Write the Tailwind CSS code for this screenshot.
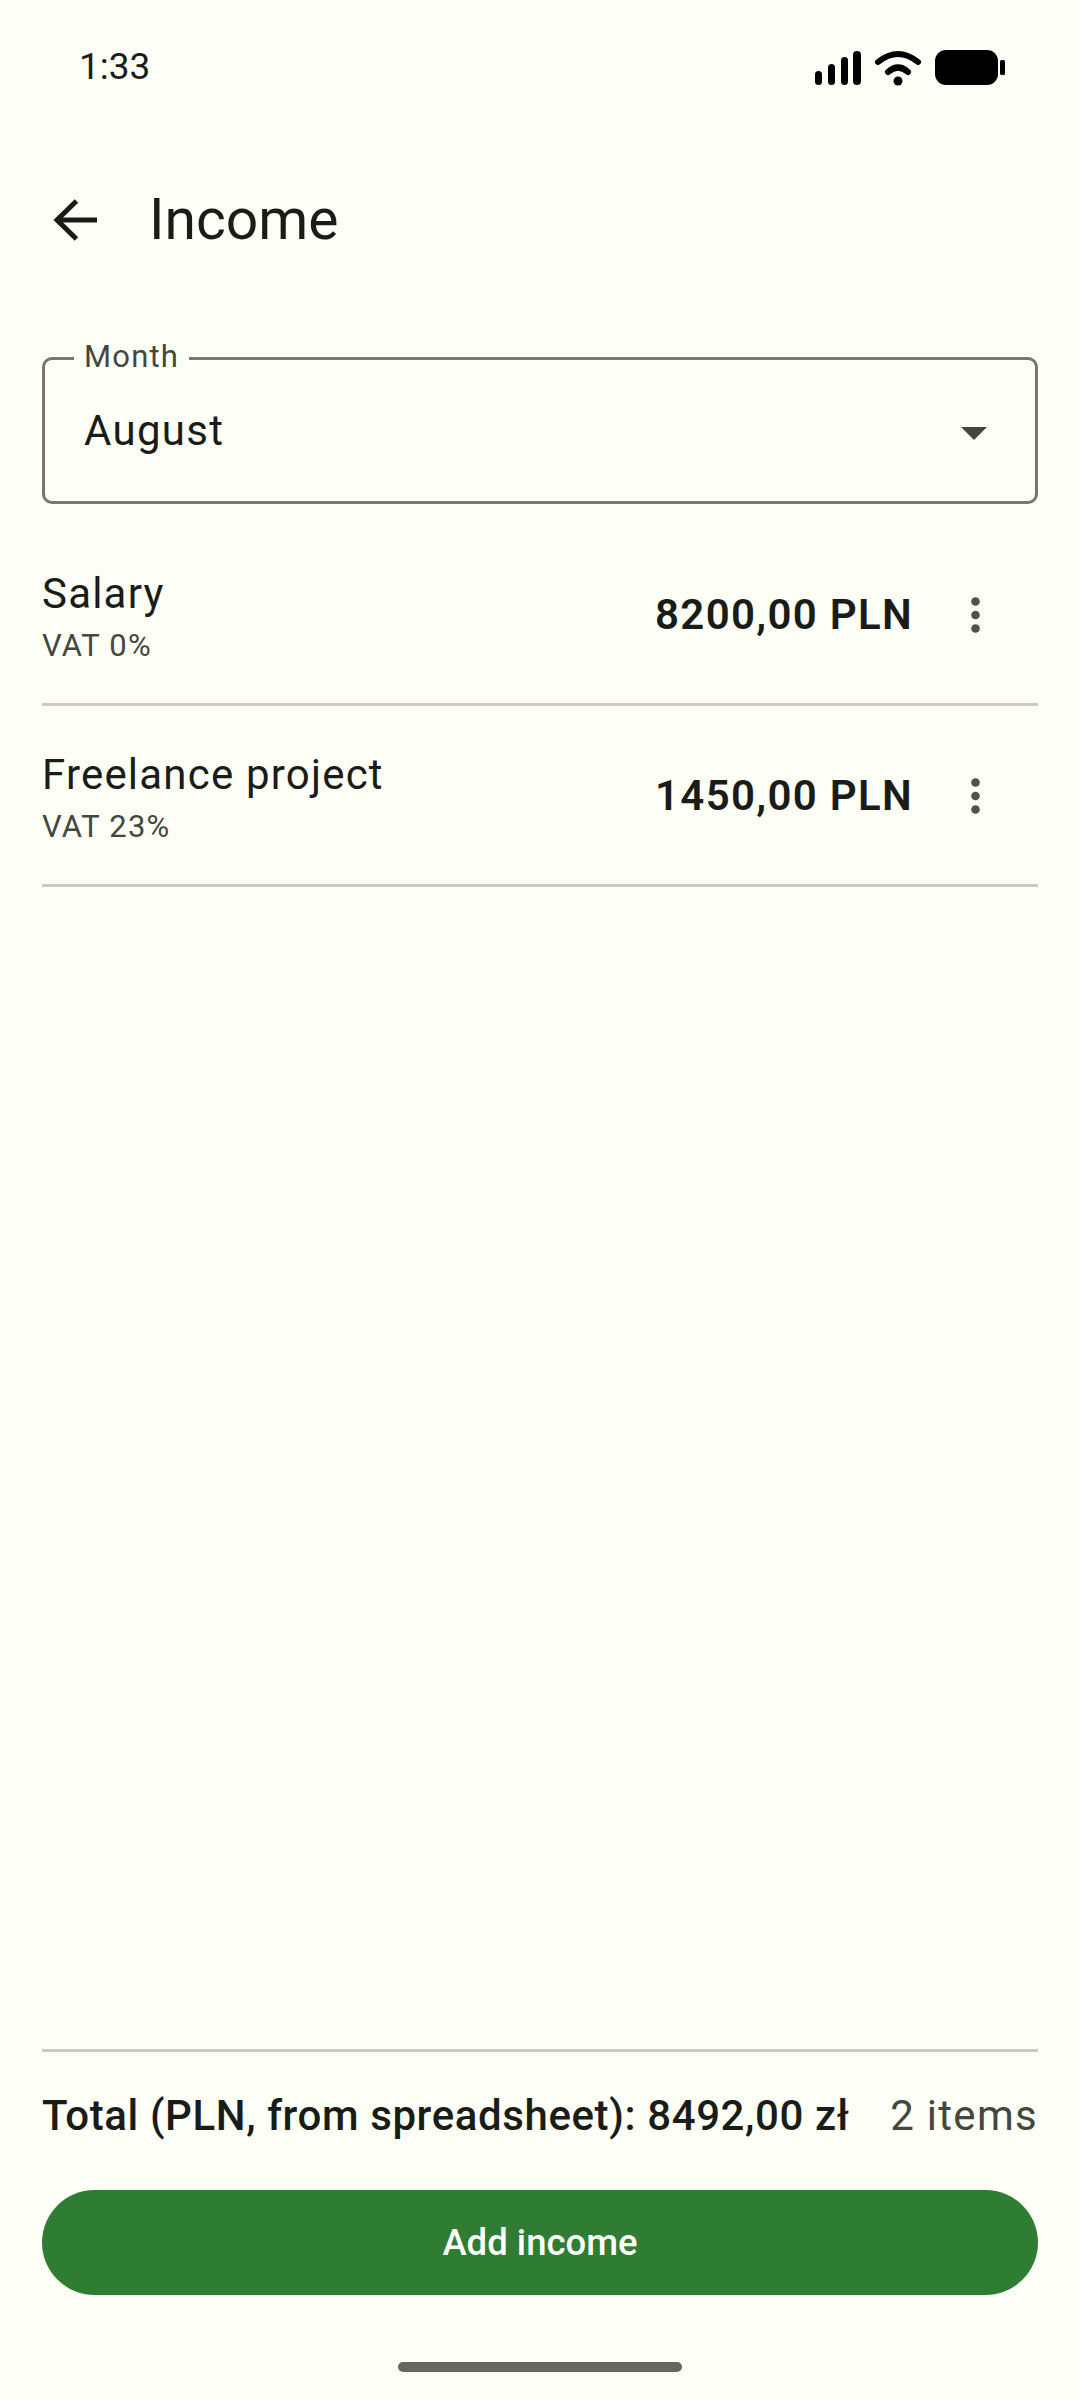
<!DOCTYPE html>
<html lang="en">
<head>
  <meta charset="UTF-8" />
  <meta name="viewport" content="width=device-width, initial-scale=1.0" />
  <title>Income</title>
  <script src="https://cdn.jsdelivr.net/npm/@tailwindcss/browser@4"></script>
</head>
<body class="bg-[#fdfef6] text-[#1a1c18] font-['Roboto',sans-serif] flex flex-col h-[2400px] w-[1080px] overflow-hidden">

  <!-- Status bar -->
  <div class="h-[136px] pl-[79px] pr-[75px] pt-[44px] flex justify-between items-start shrink-0">
    <span class="text-[37px] leading-[46px] text-[#1a1c18]">1:33</span>
    <svg class="w-[190px] h-[40px] mt-[6px]" viewBox="0 0 190 40" fill="#000">
      <rect x="0" y="21" width="7" height="14" rx="3.5" />
      <rect x="13" y="14" width="7" height="21" rx="3.5" />
      <rect x="26" y="7" width="7" height="28" rx="3.5" />
      <rect x="38" y="1" width="8" height="34" rx="4" />
      <path d="M63 12 Q83 -4 103 12" fill="none" stroke="#000" stroke-width="6" stroke-linecap="round" />
      <path d="M73 22 Q83 13 93 22" fill="none" stroke="#000" stroke-width="6" stroke-linecap="round" />
      <circle cx="83" cy="31" r="4.5" />
      <rect x="120" y="0" width="63" height="35" rx="11" />
      <rect x="185" y="10" width="5" height="15" rx="1.5" />
    </svg>
  </div>

  <!-- Header -->
  <header class="h-[168px] pl-[53px] flex items-center shrink-0">
    <svg class="w-[44px] h-[42px]" viewBox="0 0 44 42" fill="none" stroke="#1a1c18" stroke-width="5">
      <path d="M44 21H4" />
      <path d="M23.500 2 4 21l19.500 19" />
    </svg>
    <h1 class="ml-[52px] text-[57px] leading-[70px] font-normal">Income</h1>
  </header>

  <main class="flex-1 px-[42px] flex flex-col">
    <!-- Month field -->
    <div class="relative mt-[53px] h-[147px] border-[3px] border-[#74796e] rounded-[10px] pl-[39px] pr-[48px] flex items-center justify-between shrink-0">
      <span class="absolute left-[29px] top-[-23px] bg-[#fdfef6] px-[10px] text-[31px] leading-[40px] tracking-[1.200px] text-[#43483e]">Month</span>
      <span class="text-[42px] tracking-[1.300px]">August</span>
      <svg class="w-[26px] h-[13px] mt-[6px]" viewBox="0 0 26 13" fill="#43483e"><path d="M0 0h26L13 13z" /></svg>
    </div>

    <!-- Income rows -->
    <div class="h-[202px] pt-[22px] border-b-[3px] border-[#c9c9c9] flex items-center shrink-0">
      <div class="flex-1 pt-[4px]">
        <div class="text-[42px] leading-[52px] tracking-[1.200px]">Salary</div>
        <div class="mt-[6px] text-[31px] leading-[40px] tracking-[1.200px] text-[#43483e]">VAT 0%</div>
      </div>
      <span class="text-[42px] font-semibold tracking-[1.300px]">8200,00 PLN</span>
      <svg class="w-[9px] h-[36px] ml-[58px] mr-[58px]" viewBox="0 0 9 36" fill="#50534c">
        <circle cx="4.500" cy="4.500" r="4.300" /><circle cx="4.500" cy="18" r="4.300" /><circle cx="4.500" cy="31.500" r="4.300" />
      </svg>
    </div>
    <div class="h-[181px] pt-[1px] border-b-[3px] border-[#c9c9c9] flex items-center shrink-0">
      <div class="flex-1 pt-[4px]">
        <div class="text-[42px] leading-[52px] tracking-[1.200px]">Freelance project</div>
        <div class="mt-[6px] text-[31px] leading-[40px] tracking-[1.200px] text-[#43483e]">VAT 23%</div>
      </div>
      <span class="text-[42px] font-semibold tracking-[1.300px]">1450,00 PLN</span>
      <svg class="w-[9px] h-[36px] ml-[58px] mr-[58px]" viewBox="0 0 9 36" fill="#50534c">
        <circle cx="4.500" cy="4.500" r="4.300" /><circle cx="4.500" cy="18" r="4.300" /><circle cx="4.500" cy="31.500" r="4.300" />
      </svg>
    </div>

    <div class="flex-1"></div>

    <!-- Footer summary -->
    <div class="border-t-[3px] border-[#c9c9c9] h-[130px] mb-[11px] flex items-center justify-between shrink-0">
      <span class="text-[42px] font-medium tracking-[0.600px]">Total (PLN, from spreadsheet): 8492,00 zł</span>
      <span class="text-[42px] tracking-[1.300px] text-[#43483e]">2 items</span>
    </div>
    <button class="h-[105px] pt-[1px] rounded-full bg-[#2e7d32] text-white text-[36.500px] font-medium shrink-0">Add income</button>
  </main>

  <!-- Gesture bar -->
  <div class="h-[105px] flex justify-center pt-[66px] shrink-0">
    <div class="w-[284px] h-[10px] rounded-full bg-[#666762] mt-[1px]"></div>
  </div>
</body>
</html>
